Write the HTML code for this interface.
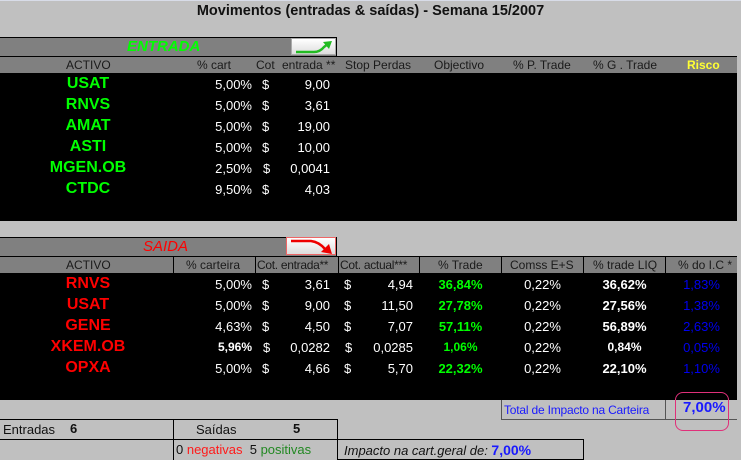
<!DOCTYPE html>
<html><head><meta charset="utf-8"><style>
*{margin:0;padding:0;box-sizing:border-box}
body{width:741px;height:460px;background:#c0c0c0;position:relative;overflow:hidden;font-family:"Liberation Sans",Arial,sans-serif;font-size:12px}
.a{position:absolute;white-space:nowrap}
.bar{position:absolute;background:#808080}
.blk{position:absolute;background:#000}
.t{font-weight:bold;font-size:16px;width:176px;text-align:center;left:0}
.g{color:#00ff00}.r{color:#ff0000}.w{color:#fff;font-size:13px}
.hd{color:#1a1a1a;font-size:12px}
.ln{position:absolute;background:#000}
</style></head><body>
<div class="a" style="left:0;top:0;width:741px;height:1px;background:#d8dce8"></div>
<div class="a" style="left:0;top:3px;width:741px;text-align:center;font-weight:bold;font-size:14.5px;color:#111">Movimentos (entradas &amp; saídas) - Semana 15/2007</div>

<!-- ENTRADA -->
<div class="bar" style="left:0;top:37px;width:337px;height:20px;border-top:1px solid #000"></div>
<div class="ln" style="left:336px;top:37px;width:1px;height:20px"></div>
<div class="a" style="left:127px;top:38px;color:#00ff00;font-style:italic;font-weight:bold;font-size:15px">ENTRADA</div>
<div class="a" style="left:291px;top:38px;width:45px;height:17px;background:linear-gradient(#fff,#ddd);border:1px solid #aaa">
<svg width="45" height="17" style="position:absolute;left:0;top:0"><path d="M4 13 L22 13 Q28 13 32 8 L37 4" stroke="#22bb22" stroke-width="2.5" fill="none"/><path d="M31 3 L40 2 L37 10 Z" fill="#22bb22"/></svg></div>
<div class="bar" style="left:0;top:56px;width:737px;height:17px;border-top:1px solid #000"></div>
<div class="a hd" style="left:66px;top:58px">ACTIVO</div>
<div class="a hd" style="left:197px;top:58px">% cart</div>
<div class="a hd" style="left:256px;top:58px">Cot</div>
<div class="a hd" style="left:282px;top:58px">entrada **</div>
<div class="a hd" style="left:345px;top:58px">Stop Perdas</div>
<div class="a hd" style="left:434px;top:58px">Objectivo</div>
<div class="a hd" style="left:513px;top:58px">% P. Trade</div>
<div class="a hd" style="left:593px;top:58px">% G . Trade</div>
<div class="a" style="left:687px;top:58px;color:#ffff33;font-weight:bold">Risco</div>
<div class="blk" style="left:0;top:73px;width:737px;height:148px"></div>

<div class="a t g" style="top:75px">USAT</div>
<div class="a t g" style="top:96px">RNVS</div>
<div class="a t g" style="top:117px">AMAT</div>
<div class="a t g" style="top:138px">ASTI</div>
<div class="a t g" style="top:159px">MGEN.OB</div>
<div class="a t g" style="top:180px">CTDC</div>
<div class="a w" style="left:200px;width:52px;text-align:right;top:77px">5,00%</div>
<div class="a w" style="left:200px;width:52px;text-align:right;top:98px">5,00%</div>
<div class="a w" style="left:200px;width:52px;text-align:right;top:119px">5,00%</div>
<div class="a w" style="left:200px;width:52px;text-align:right;top:140px">5,00%</div>
<div class="a w" style="left:200px;width:52px;text-align:right;top:161px">2,50%</div>
<div class="a w" style="left:200px;width:52px;text-align:right;top:182px">9,50%</div>
<div class="a w" style="left:262px;top:77px">$</div><div class="a w" style="left:262px;top:98px">$</div><div class="a w" style="left:262px;top:119px">$</div><div class="a w" style="left:262px;top:140px">$</div><div class="a w" style="left:263px;top:161px">$</div><div class="a w" style="left:262px;top:182px">$</div>
<div class="a w" style="left:280px;width:50px;text-align:right;top:77px">9,00</div>
<div class="a w" style="left:280px;width:50px;text-align:right;top:98px">3,61</div>
<div class="a w" style="left:280px;width:50px;text-align:right;top:119px">19,00</div>
<div class="a w" style="left:280px;width:50px;text-align:right;top:140px">10,00</div>
<div class="a w" style="left:280px;width:50px;text-align:right;top:161px">0,0041</div>
<div class="a w" style="left:280px;width:50px;text-align:right;top:182px">4,03</div>

<!-- SAIDA -->
<div class="bar" style="left:0;top:237px;width:337px;height:20px;border-top:1px solid #000"></div>
<div class="ln" style="left:336px;top:237px;width:1px;height:20px"></div>
<div class="a" style="left:143px;top:238px;color:#ff0000;font-style:italic;font-size:15px">SAIDA</div>
<div class="a" style="left:286px;top:237px;width:50px;height:18px;background:linear-gradient(#fff,#ddd);border:1px solid #e66">
<svg width="50" height="18" style="position:absolute;left:0;top:0"><path d="M4 3 L24 3 Q32 4 38 11" stroke="#ee0000" stroke-width="2.5" fill="none"/><path d="M34 14 L45 16 L42 6 Z" fill="#ee0000"/></svg></div>
<div class="bar" style="left:0;top:256px;width:737px;height:17px;border-top:1px solid #000"></div>
<div class="ln" style="left:173px;top:256px;width:1px;height:17px"></div>
<div class="ln" style="left:255px;top:256px;width:1px;height:17px"></div>
<div class="ln" style="left:338px;top:256px;width:1px;height:17px"></div>
<div class="ln" style="left:419px;top:256px;width:1px;height:17px"></div>
<div class="ln" style="left:501px;top:256px;width:1px;height:17px"></div>
<div class="ln" style="left:583px;top:256px;width:1px;height:17px"></div>
<div class="ln" style="left:665px;top:256px;width:1px;height:17px"></div>
<div class="a hd" style="left:66px;top:258px">ACTIVO</div>
<div class="a hd" style="left:186px;top:258px">% carteira</div>
<div class="a hd" style="left:257px;top:258px;letter-spacing:-0.3px">Cot. entrada**</div>
<div class="a hd" style="left:340px;top:258px;letter-spacing:-0.3px">Cot. actual***</div>
<div class="a hd" style="left:438px;top:258px">% Trade</div>
<div class="a hd" style="left:510px;top:258px">Comss E+S</div>
<div class="a hd" style="left:593px;top:258px">% trade LIQ</div>
<div class="a hd" style="left:678px;top:258px">% do I.C *</div>
<div class="blk" style="left:0;top:273px;width:737px;height:127px"></div>

<div class="a t r" style="top:275px">RNVS</div>
<div class="a t r" style="top:296px">USAT</div>
<div class="a t r" style="top:317px">GENE</div>
<div class="a t r" style="top:338px">XKEM.OB</div>
<div class="a t r" style="top:359px">OPXA</div>
<div class="a w" style="left:200px;width:52px;text-align:right;top:277px">5,00%</div>
<div class="a w" style="left:200px;width:52px;text-align:right;top:298px">5,00%</div>
<div class="a w" style="left:200px;width:52px;text-align:right;top:319px">4,63%</div>
<div class="a w" style="left:200px;width:52px;text-align:right;top:340px;font-weight:bold;font-size:12px">5,96%</div>
<div class="a w" style="left:200px;width:52px;text-align:right;top:361px">5,00%</div>
<div class="a w" style="left:262px;top:277px">$</div><div class="a w" style="left:262px;top:298px">$</div><div class="a w" style="left:262px;top:319px">$</div><div class="a w" style="left:263px;top:340px">$</div><div class="a w" style="left:262px;top:361px">$</div>
<div class="a w" style="left:280px;width:50px;text-align:right;top:277px">3,61</div>
<div class="a w" style="left:280px;width:50px;text-align:right;top:298px">9,00</div>
<div class="a w" style="left:280px;width:50px;text-align:right;top:319px">4,50</div>
<div class="a w" style="left:280px;width:50px;text-align:right;top:340px">0,0282</div>
<div class="a w" style="left:280px;width:50px;text-align:right;top:361px">4,66</div>
<div class="a w" style="left:344px;top:277px">$</div><div class="a w" style="left:344px;top:298px">$</div><div class="a w" style="left:344px;top:319px">$</div><div class="a w" style="left:345px;top:340px">$</div><div class="a w" style="left:344px;top:361px">$</div>
<div class="a w" style="left:360px;width:53px;text-align:right;top:277px">4,94</div>
<div class="a w" style="left:360px;width:53px;text-align:right;top:298px">11,50</div>
<div class="a w" style="left:360px;width:53px;text-align:right;top:319px">7,07</div>
<div class="a w" style="left:360px;width:53px;text-align:right;top:340px">0,0285</div>
<div class="a w" style="left:360px;width:53px;text-align:right;top:361px">5,70</div>

<div class="a" style="left:420px;width:81px;text-align:center;top:277px;color:#00ff00;font-weight:bold;font-size:13px">36,84%</div>
<div class="a" style="left:420px;width:81px;text-align:center;top:298px;color:#00ff00;font-weight:bold;font-size:13px">27,78%</div>
<div class="a" style="left:420px;width:81px;text-align:center;top:319px;color:#00ff00;font-weight:bold;font-size:13px">57,11%</div>
<div class="a" style="left:420px;width:81px;text-align:center;top:340px;color:#00ff00;font-weight:bold;font-size:12px">1,06%</div>
<div class="a" style="left:420px;width:81px;text-align:center;top:361px;color:#00ff00;font-weight:bold;font-size:13px">22,32%</div>
<div class="a w" style="left:502px;width:81px;text-align:center;top:277px">0,22%</div>
<div class="a w" style="left:502px;width:81px;text-align:center;top:298px">0,22%</div>
<div class="a w" style="left:502px;width:81px;text-align:center;top:319px">0,22%</div>
<div class="a w" style="left:502px;width:81px;text-align:center;top:340px">0,22%</div>
<div class="a w" style="left:502px;width:81px;text-align:center;top:361px">0,22%</div>
<div class="a w" style="left:584px;width:81px;text-align:center;top:277px;font-weight:bold">36,62%</div>
<div class="a w" style="left:584px;width:81px;text-align:center;top:298px;font-weight:bold">27,56%</div>
<div class="a w" style="left:584px;width:81px;text-align:center;top:319px;font-weight:bold">56,89%</div>
<div class="a w" style="left:584px;width:81px;text-align:center;top:340px;font-weight:bold;font-size:12px">0,84%</div>
<div class="a w" style="left:584px;width:81px;text-align:center;top:361px;font-weight:bold">22,10%</div>
<div class="a" style="left:666px;width:71px;text-align:center;top:277px;color:#0000ee;font-size:13px">1,83%</div>
<div class="a" style="left:666px;width:71px;text-align:center;top:298px;color:#0000ee;font-size:13px">1,38%</div>
<div class="a" style="left:666px;width:71px;text-align:center;top:319px;color:#0000ee;font-size:13px">2,63%</div>
<div class="a" style="left:666px;width:71px;text-align:center;top:340px;color:#0000ee;font-size:13px">0,05%</div>
<div class="a" style="left:666px;width:71px;text-align:center;top:361px;color:#0000ee;font-size:13px">1,10%</div>

<!-- total -->
<div class="a" style="left:501px;top:400px;width:236px;height:20px;border-left:1px solid #555;border-bottom:1px solid #555"></div>
<div class="ln" style="left:665px;top:400px;width:1px;height:20px;background:#555"></div>
<div class="a" style="left:504px;top:403px;color:#1a1aff;font-size:12px;letter-spacing:-0.2px">Total de Impacto na Carteira</div>
<div class="a" style="left:683px;top:399px;color:#1a1aff;font-weight:bold;font-size:15px">7,00%</div>
<div class="a" style="left:675px;top:392px;width:54px;height:39px;border:1px solid #e0307a;border-radius:8px"></div>

<!-- bottom -->
<div class="a" style="left:0;top:419px;width:337px;height:1px;background:#000"></div>
<div class="a" style="left:173px;top:419px;width:1px;height:41px;background:#000"></div>
<div class="a" style="left:337px;top:419px;width:1px;height:20px;background:#000"></div>
<div class="a" style="left:0;top:439px;width:337px;height:1px;background:#000"></div>
<div class="a" style="left:337px;top:439px;width:247px;height:21px;border:1px solid #000"></div>
<div class="a" style="left:3px;top:422px;font-size:13px;color:#111">Entradas</div>
<div class="a" style="left:70px;top:421px;font-size:13px;font-weight:bold;color:#111">6</div>
<div class="a" style="left:196px;top:422px;font-size:13px;color:#111">Saídas</div>
<div class="a" style="left:293px;top:421px;font-size:13px;font-weight:bold;color:#111">5</div>
<div class="a" style="left:176px;top:442px;font-size:13px;color:#111">0 <span style="color:#ff1a1a">negativas</span> &nbsp;5 <span style="color:#228822">positivas</span></div>
<div class="a" style="left:344px;top:442px;font-size:13px;font-style:italic;color:#111">Impacto na cart.geral de: <span style="font-style:normal;font-weight:bold;color:#1a1aff;font-size:14px">7,00%</span></div>
</body></html>
